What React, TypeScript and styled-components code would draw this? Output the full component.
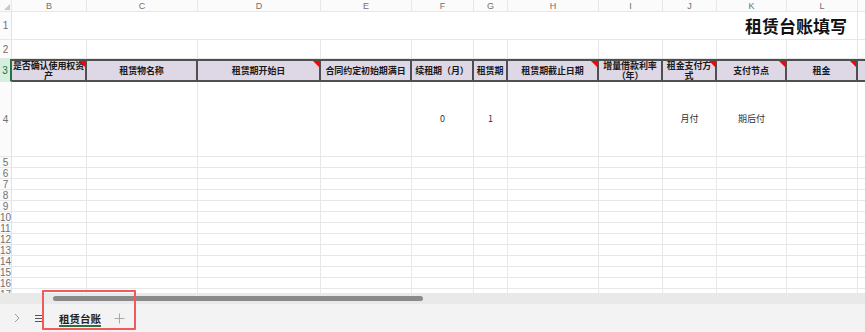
import styled, { createGlobalStyle, css } from "styled-components";

const GlobalStyle = createGlobalStyle`
  html, body {
    margin: 0;
    padding: 0;
    background: #ffffff;
    overflow: hidden;
  }
  body {
    font-family: "Liberation Sans", "Noto Sans CJK SC", sans-serif;
  }
`;

const columns = [
  { key: "B", width: 75 },
  { key: "C", width: 111 },
  { key: "D", width: 123 },
  { key: "E", width: 91 },
  { key: "F", width: 62 },
  { key: "G", width: 34 },
  { key: "H", width: 91 },
  { key: "I", width: 64 },
  { key: "J", width: 54 },
  { key: "K", width: 70 },
  { key: "L", width: 71 },
  { key: "", width: 40 },
];

const headers = [
  { text: "是否确认使用权资产", flag: true },
  { text: "租赁物名称", flag: false },
  { text: "租赁期开始日", flag: true },
  { text: "合同约定初始期满日", flag: false },
  { text: "续租期（月）", flag: false },
  { text: "租赁期", flag: false },
  { text: "租赁期截止日期", flag: true },
  { text: "增量借款利率（年）", flag: false },
  { text: "租金支付方式", flag: true },
  { text: "支付节点", flag: true },
  { text: "租金", flag: true },
  { text: "", flag: false },
];

const dataRow = ["", "", "", "", "0", "1", "", "", "月付", "期后付", "", ""];

const smallRows = [5, 6, 7, 8, 9, 10, 11, 12, 13, 14, 15, 16, 17];

const App = () => {
  return (
    <>
      <GlobalStyle />
      <Screen>
        <Sheet>
          <Corner>
            <CornerMark />
          </Corner>
          {columns.map((c, i) => (
            <ColHead key={i}>{c.key}</ColHead>
          ))}

          <RowHead $h={28}>1</RowHead>
          <TitleCell>租赁台账填写</TitleCell>
          <Cell />

          <RowHead $h={19}>2</RowHead>
          {columns.map((c, i) => (
            <Cell key={i} />
          ))}

          <RowHead $h={23} $active>
            3
          </RowHead>
          {headers.map((h, i) => (
            <HeadCell key={i} $last={i === headers.length - 1}>
              <span>{h.text}</span>
              {h.flag && <Flag />}
            </HeadCell>
          ))}

          <RowHead $h={75}>4</RowHead>
          {dataRow.map((v, i) => (
            <DataCell key={i}>{v}</DataCell>
          ))}

          {smallRows.map((r) => (
            <Row key={r}>
              <RowHead $h={11}>{r}</RowHead>
              {columns.map((c, i) => (
                <Cell key={i} />
              ))}
            </Row>
          ))}
        </Sheet>

        <ScrollTrack>
          <ScrollThumb />
        </ScrollTrack>

        <TabBar>
          <NavIcon>
            <svg width="8" height="10" viewBox="0 0 8 10">
              <path d="M2 1 L6 5 L2 9" fill="none" stroke="#9a9a9a" strokeWidth="1" />
            </svg>
          </NavIcon>
          <NavIcon>
            <svg width="10" height="9" viewBox="0 0 10 9">
              <path d="M1 1.5 H9 M1 4.5 H9 M1 7.5 H9" stroke="#555" strokeWidth="1" />
            </svg>
          </NavIcon>
          <Tab>租赁台账</Tab>
          <AddTab>
            <svg width="11" height="11" viewBox="0 0 11 11">
              <path d="M5.5 0.5 V10.5 M0.5 5.5 H10.5" stroke="#a8a8a8" strokeWidth="1" />
            </svg>
          </AddTab>
          <Highlight />
        </TabBar>
      </Screen>
    </>
  );
};

export default App;

const Screen = styled.div`
  position: relative;
  width: 865px;
  height: 332px;
  display: flex;
  flex-direction: column;
  background: #ffffff;
  overflow: hidden;
`;

const Sheet = styled.div`
  display: grid;
  grid-template-columns: 12px ${columns.map((c) => `${c.width}px`).join(" ")};
  grid-auto-rows: auto;
  height: 293px;
  overflow: hidden;
  font-size: 9px;
  color: #222;
`;

const Row = styled.div`
  display: contents;
`;

const gridLine = css`
  box-sizing: border-box;
  border-right: 1px solid #e7e7e7;
  border-bottom: 1px solid #e7e7e7;
`;

const Corner = styled.div`
  ${gridLine};
  position: relative;
  height: 12px;
  background: #fafafa;
`;

const CornerMark = styled.div`
  position: absolute;
  right: 1px;
  bottom: 1px;
  width: 0;
  height: 0;
  border-left: 6px solid transparent;
  border-bottom: 6px solid #c8c8c8;
`;

const ColHead = styled.div`
  ${gridLine};
  height: 12px;
  display: flex;
  align-items: center;
  justify-content: center;
  font-size: 9px;
  color: #707070;
  background: #fbfbfb;
`;

const RowHead = styled.div<{ $h: number; $active?: boolean }>`
  ${gridLine};
  height: ${(p) => p.$h}px;
  display: flex;
  align-items: center;
  justify-content: center;
  font-size: 10px;
  line-height: 11px;
  color: ${(p) => (p.$active ? "#217346" : "#707070")};
  background: ${(p) => (p.$active ? "#d6eedd" : "#fbfbfb")};
  border-right: ${(p) => (p.$active ? "2px solid #217346" : "1px solid #e2e2e2")};
  overflow: visible;
  white-space: nowrap;
`;

const Cell = styled.div`
  ${gridLine};
`;

const TitleCell = styled.div`
  ${gridLine};
  grid-column: span 11;
  display: flex;
  align-items: center;
  justify-content: flex-end;
  padding-right: 10px;
  font-family: "Noto Sans CJK SC", sans-serif;
  font-size: 17px;
  font-weight: 700;
  color: #111;
`;

const HeadCell = styled.div<{ $last?: boolean }>`
  position: relative;
  box-sizing: border-box;
  display: flex;
  align-items: center;
  justify-content: center;
  text-align: center;
  padding: 0;
  background: #ddd7e6;
  border-top: 2px solid #4f4f4f;
  border-bottom: 2px solid #4f4f4f;
  border-right: ${(p) => (p.$last ? "none" : "2px solid #4f4f4f")};
  font-family: "Noto Sans CJK SC", sans-serif;
  font-size: 9px;
  font-weight: 700;
  line-height: 10px;
  letter-spacing: -0.1px;
  color: #1a1a1a;
  overflow: hidden;
`;

const Flag = styled.div`
  position: absolute;
  top: 0;
  right: 0;
  width: 0;
  height: 0;
  border-top: 6px solid #ff0000;
  border-left: 6px solid transparent;
`;

const DataCell = styled.div`
  ${gridLine};
  display: flex;
  align-items: center;
  justify-content: center;
  padding-bottom: 2px;
  font-family: "Noto Sans CJK SC", sans-serif;
  font-size: 9px;
  color: #333;
`;

const ScrollTrack = styled.div`
  height: 11px;
  display: flex;
  align-items: center;
  padding-left: 53px;
  background: #e9e9e9;
`;

const ScrollThumb = styled.div`
  width: 370px;
  height: 5px;
  border-radius: 3px;
  background: #8a8a8a;
`;

const TabBar = styled.div`
  position: relative;
  flex: 1;
  display: flex;
  align-items: center;
  padding-left: 6px;
  background: #f3f3f3;
`;

const NavIcon = styled.div`
  width: 22px;
  display: flex;
  align-items: center;
  justify-content: center;
`;

const Tab = styled.div`
  position: relative;
  margin-left: 9px;
  height: 100%;
  display: flex;
  align-items: center;
  font-family: "Noto Sans CJK SC", sans-serif;
  font-size: 10.5px;
  font-weight: 700;
  color: #222;
  &::after {
    content: "";
    position: absolute;
    left: 0;
    right: 0;
    bottom: 5px;
    height: 2px;
    background: #217346;
  }
`;

const AddTab = styled.div`
  margin-left: 13px;
  display: flex;
  align-items: center;
`;

const Highlight = styled.div`
  position: absolute;
  left: 42px;
  top: -14px;
  width: 94px;
  height: 40px;
  border: 2px solid #ef5b5b;
  border-radius: 1px;
  box-sizing: border-box;
`;
